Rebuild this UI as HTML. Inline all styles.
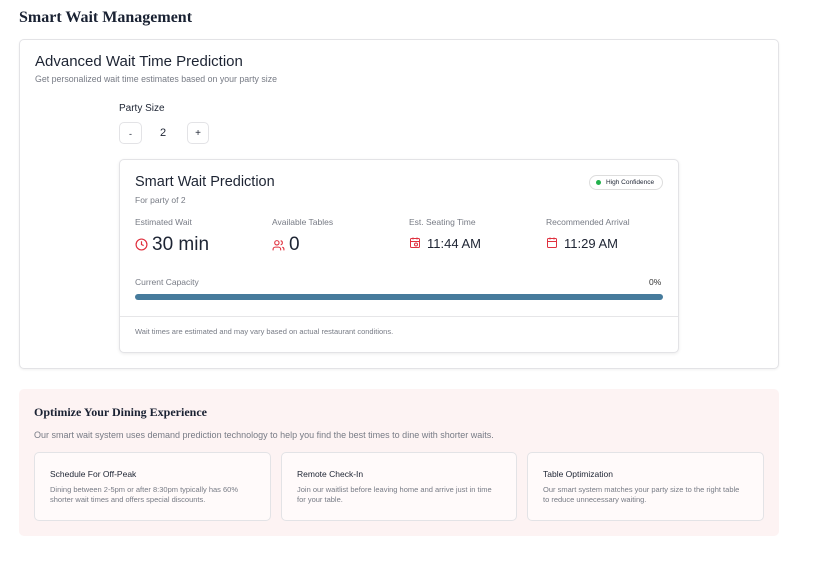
<!DOCTYPE html><html><head><style>
*{margin:0;padding:0;box-sizing:border-box}
body{width:837px;height:570px;background:#fff;font-family:"Liberation Sans",sans-serif;color:#1d2433;position:relative;overflow:hidden}
.a{position:absolute;white-space:nowrap}
.serif{font-family:"Liberation Serif",serif;font-weight:bold}
.box{position:absolute;border:1px solid #e3e3e6;border-radius:5px;background:#fff}
.g{color:#777b85}
</style></head><body>
<div class="a serif" style="left:19px;top:9px;font-size:16px;color:#1a2233">Smart Wait Management</div>
<div class="box" style="left:19px;top:39px;width:760px;height:330px;box-shadow:0 1px 2px rgba(0,0,0,.06)"></div>
<div class="a" style="left:35px;top:53px;font-size:15px">Advanced Wait Time Prediction</div>
<div class="a g" style="left:35px;top:74px;font-size:8.8px">Get personalized wait time estimates based on your party size</div>
<div class="a" style="left:119px;top:103px;font-size:10px">Party Size</div>
<div class="box" style="left:119px;top:122px;width:23px;height:22px;font-size:9px;text-align:center;line-height:22px">-</div>
<div class="a" style="left:160px;top:127px;font-size:11px">2</div>
<div class="box" style="left:187px;top:122px;width:22px;height:22px;font-size:10px;text-align:center;line-height:22px">+</div>

<div class="box" style="left:119px;top:159px;width:560px;height:194px;box-shadow:0 1px 3px rgba(0,0,0,.08)"></div>
<div class="a" style="left:135px;top:174px;font-size:14.5px">Smart Wait Prediction</div>
<div class="a" style="left:589px;top:175px;width:74px;height:15px;border:1px solid #ddd;border-radius:8px;font-size:6.5px;line-height:13px;padding-left:16px">High Confidence</div>
<div class="a" style="left:596px;top:180px;width:5px;height:5px;border-radius:50%;background:#22b14c"></div>
<div class="a g" style="left:135px;top:195px;font-size:8.5px">For party of 2</div>
<div class="a g" style="left:135px;top:217px;font-size:8.5px">Estimated Wait</div>
<div class="a g" style="left:272px;top:217px;font-size:8.5px">Available Tables</div>
<div class="a g" style="left:409px;top:217px;font-size:8.5px">Est. Seating Time</div>
<div class="a g" style="left:546px;top:217px;font-size:8.5px">Recommended Arrival</div>
<svg class="a" style="left:135px;top:238px" width="13" height="13" viewBox="0 0 24 24" fill="none" stroke="#e0303e" stroke-width="2.2"><circle cx="12" cy="12" r="10"/><path d="M12 6v6l4 2"/></svg>
<div class="a" style="left:152px;top:234px;font-size:19px">30 min</div>
<svg class="a" style="left:272px;top:239px" width="13" height="13" viewBox="0 0 24 24" fill="none" stroke="#e0303e" stroke-width="2"><circle cx="9" cy="7" r="4"/><path d="M2 21v-2a4 4 0 0 1 4-4h6a4 4 0 0 1 4 4v2M16 3.1a4 4 0 0 1 0 7.8M22 21v-2a4 4 0 0 0-3-3.9"/></svg>
<div class="a" style="left:289px;top:234px;font-size:19px">0</div>
<svg class="a" style="left:409px;top:236px" width="12" height="13" viewBox="0 0 24 24" fill="none" stroke="#e0303e" stroke-width="2"><rect x="3" y="4" width="18" height="18" rx="2"/><path d="M16 2v4M8 2v4M3 10h18"/><circle cx="14" cy="16" r="3"/></svg>
<div class="a" style="left:427px;top:236px;font-size:13px">11:44 AM</div>
<svg class="a" style="left:546px;top:236px" width="12" height="13" viewBox="0 0 24 24" fill="none" stroke="#e0303e" stroke-width="2"><rect x="3" y="4" width="18" height="18" rx="2"/><path d="M16 2v4M8 2v4M3 10h18"/></svg>
<div class="a" style="left:564px;top:236px;font-size:13px">11:29 AM</div>
<div class="a g" style="left:135px;top:277px;font-size:8.5px">Current Capacity</div>
<div class="a" style="left:649px;top:277px;font-size:8.5px;color:#333">0%</div>
<div class="a" style="left:135px;top:294px;width:528px;height:6px;border-radius:3px;background:#467b9c"></div>
<div class="a" style="left:120px;top:316px;width:558px;height:1px;background:#e6e6e8"></div>
<div class="a g" style="left:135px;top:327px;font-size:7.5px">Wait times are estimated and may vary based on actual restaurant conditions.</div>

<div class="a" style="left:19px;top:389px;width:760px;height:147px;background:#fdf3f3;border-radius:5px"></div>
<div class="a serif" style="left:34px;top:405px;font-size:12px;color:#1a2233">Optimize Your Dining Experience</div>
<div class="a g" style="left:34px;top:430px;font-size:9px">Our smart wait system uses demand prediction technology to help you find the best times to dine with shorter waits.</div>
<div class="box" style="left:34px;top:452px;width:237px;height:69px;background:#fffafa"></div>
<div class="box" style="left:281px;top:452px;width:236px;height:69px;background:#fffafa"></div>
<div class="box" style="left:527px;top:452px;width:237px;height:69px;background:#fffafa"></div>
<div class="a" style="left:50px;top:469px;font-size:8.5px">Schedule For Off-Peak</div>
<div class="a g" style="left:50px;top:485px;font-size:7.5px;line-height:10px">Dining between 2-5pm or after 8:30pm typically has 60%<br>shorter wait times and offers special discounts.</div>
<div class="a" style="left:297px;top:469px;font-size:8.5px">Remote Check-In</div>
<div class="a g" style="left:297px;top:485px;font-size:7.5px;line-height:10px">Join our waitlist before leaving home and arrive just in time<br>for your table.</div>
<div class="a" style="left:543px;top:469px;font-size:8.5px">Table Optimization</div>
<div class="a g" style="left:543px;top:485px;font-size:7.5px;line-height:10px">Our smart system matches your party size to the right table<br>to reduce unnecessary waiting.</div>
</body></html>
